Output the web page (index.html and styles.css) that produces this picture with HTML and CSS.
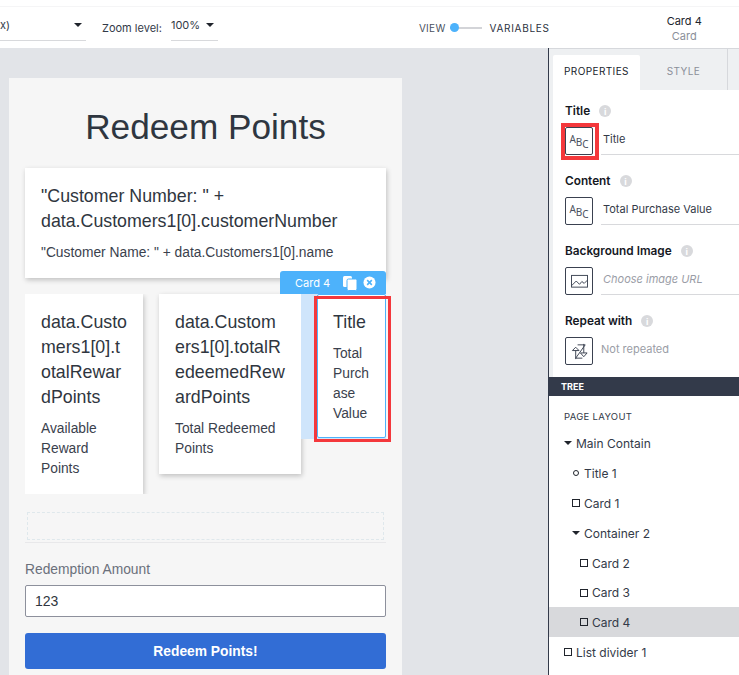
FILE: index.html
```html
<!DOCTYPE html>
<html lang="en">
<head>
<meta charset="utf-8">
<title>Redeem Points</title>
<link rel="stylesheet" href="styles.css">
</head>
<body>
<div class="app">
  <header class="toolbar">
    <div class="select select-device"><span>x)</span><i class="caret"></i></div>
    <span class="zoom-label">Zoom level:</span>
    <div class="select select-zoom"><span>100%</span><i class="caret"></i></div>
    <div class="toggle">
      <span class="toggle-view">VIEW</span>
      <span class="switch"><i class="knob"></i></span>
      <span class="toggle-vars">VARIABLES</span>
    </div>
    <div class="selected-name"><span class="sel-title">Card 4</span><span class="sel-type">Card</span></div>
  </header>
  <div class="workspace">
    <main class="canvas">
      <div class="phone">
        <h1 class="page-title">Redeem Points</h1>
        <section class="card card-wide">
          <h2 class="card-title">"Customer Number: " + data.Customers1[0].customerNumber</h2>
          <p class="card-body">"Customer Name: " + data.Customers1[0].name</p>
        </section>
        <div class="card-row">
          <section class="card card-two">
            <h2 class="card-title">data.Customers1[0].totalRewardPoints</h2>
            <p class="card-body">Available Reward Points</p>
          </section>
          <section class="card card-three">
            <h2 class="card-title">data.Customers1[0].totalRedeemedRewardPoints</h2>
            <p class="card-body">Total Redeemed Points</p>
          </section>
          <div class="card-four-slot">
            <section class="card card-four">
              <h2 class="card-title">Title</h2>
              <p class="card-body">Total Purchase Value</p>
            </section>
            <div class="badge">
              <span>Card 4</span>
              <svg class="badge-icon" viewBox="0 0 16 16" width="16" height="16"><rect x="1" y="1" width="9" height="11" rx="1.5" fill="#fff"/><rect x="5" y="4" width="10" height="11.5" rx="1.5" fill="#fff" stroke="#4db2fb" stroke-width="1"/></svg>
              <svg class="badge-icon" viewBox="0 0 14 14" width="13" height="13"><circle cx="7" cy="7" r="6.5" fill="#fff"/><path d="M4.5 4.5l5 5M9.5 4.5l-5 5" stroke="#4db2fb" stroke-width="1.7"/></svg>
            </div>
            <div class="red-frame"></div>
          </div>
        </div>
        <div class="dropzone"></div>
        <div class="divider"></div>
        <label class="field-label">Redemption Amount</label>
        <div class="field-input">123</div>
        <button class="redeem">Redeem Points!</button>
      </div>
    </main>
    <aside class="panel">
      <nav class="tabs">
        <span class="tab tab-active">PROPERTIES</span>
        <span class="tab">STYLE</span>
        <span class="tab tab-rest"></span>
      </nav>
      <div class="props">
        <div class="prop">
          <div class="prop-label">Title <i class="info">i</i></div>
          <div class="prop-row">
            <span class="prop-icon prop-icon-marked"><span class="abc"><b>A</b><b>B</b><b>C</b></span></span>
            <span class="prop-value">Title</span>
          </div>
        </div>
        <div class="prop">
          <div class="prop-label">Content <i class="info">i</i></div>
          <div class="prop-row">
            <span class="prop-icon"><span class="abc"><b>A</b><b>B</b><b>C</b></span></span>
            <span class="prop-value">Total Purchase Value</span>
          </div>
        </div>
        <div class="prop">
          <div class="prop-label">Background Image <i class="info">i</i></div>
          <div class="prop-row">
            <span class="prop-icon"><svg viewBox="0 0 20 16" width="19" height="15" fill="none" stroke="#3a4150"><rect x="1.5" y="1.5" width="17" height="12.500"/><path d="M1.5 12.500l5-5 3.500 3.500 2.500-3 2.500 2 3.500-3.500"/></svg></span>
            <span class="prop-value prop-placeholder">Choose image URL</span>
          </div>
        </div>
        <div class="prop">
          <div class="prop-label">Repeat with <i class="info">i</i></div>
          <div class="prop-row prop-row-plain">
            <span class="prop-icon"><svg viewBox="0 0 20 20" width="19" height="19" fill="none" stroke="#3a4150"><path d="M2.500 9L6 5.500 9.500 9zM6 9v9M11 11.500h7l-3.500 4zM14.500 2v9.500M8 3h8L6 17h7"/></svg></span>
            <span class="prop-value prop-muted">Not repeated</span>
          </div>
        </div>
      </div>
      <div class="tree-head">TREE</div>
      <div class="tree">
        <div class="tree-title">PAGE LAYOUT</div>
        <div class="node lvl0"><i class="caret caret-sm"></i>Main Contain</div>
        <div class="node lvl1"><i class="dot"></i>Title 1</div>
        <div class="node lvl1"><i class="box"></i>Card 1</div>
        <div class="node lvl1"><i class="caret caret-sm"></i>Container 2</div>
        <div class="node lvl2"><i class="box"></i>Card 2</div>
        <div class="node lvl2 node-tight"><i class="box"></i>Card 3</div>
        <div class="node lvl2 node-selected"><i class="box"></i>Card 4</div>
        <div class="node lvl0"><i class="box"></i>List divider 1</div>
      </div>
    </aside>
  </div>
</div>
</body>
</html>
```
FILE: styles.css
```css
* { box-sizing: border-box; }
html, body { margin: 0; padding: 0; height: 100%; overflow: hidden; background: #fff; }
body { font-family: "Liberation Sans", sans-serif; color: #2f3542; }
.app { width: 739px; height: 675px; display: flex; flex-direction: column; overflow: hidden; }

.toolbar { flex: none; display: flex; align-items: center; background: #fff; border-top: 1px solid #f5f5f6; margin-top: 6px; height: 42px; font-family: Inter, sans-serif; font-size: 11px; color: #333a48; }
.select { align-self: flex-start; display: flex; align-items: center; justify-content: space-between; height: 34px; border-bottom: 1px solid #d8d9dc; font-size: 11px; padding-top: 2px; }
.select-device { width: 86px; padding-right: 4px; }
.select-zoom { width: 47px; margin-left: 9px; padding-right: 4px; }
.caret { display: block; width: 0; height: 0; border-left: 4.5px solid transparent; border-right: 4.5px solid transparent; border-top: 4.5px solid #20242c; }
.zoom-label { margin-left: 16px; padding-top: 1px; }
.toggle { display: flex; align-items: center; margin-left: 201px; font-size: 10px; letter-spacing: .3px; }
.toggle-view { color: #4a5160; }
.toggle-vars { color: #2b3140; margin-left: 8px; letter-spacing: .7px; }
.switch { position: relative; width: 32px; height: 2px; background: #d3d4d8; margin-left: 4px; }
.knob { position: absolute; left: 0; top: -4px; width: 9px; height: 9px; border-radius: 50%; background: #4db2fb; }
.selected-name { display: flex; flex-direction: column; align-items: center; margin-left: 117px; line-height: 15px; padding-top: 2px; }
.sel-title { color: #20242c; }
.sel-type { color: #8b8f99; }

.workspace { flex: 1; display: flex; min-height: 0; }
.canvas { width: 548px; flex: none; background: #e2e4e8; padding: 30px 0 0 9px; overflow: hidden; }
.phone { width: 393px; height: 620px; background: #f6f6f6; padding: 0 16px; display: flex; flex-direction: column; }
.page-title { margin: 0; height: 90px; line-height: 98px; font-size: 35.200px; font-weight: 400; text-align: center; color: #2f3640; }
.card { background: #fff; box-shadow: 1px 2px 5px rgba(0,0,0,.22); padding: 16px; overflow-wrap: anywhere; }
.card-title { margin: 0; font-size: 17.800px; font-weight: 400; line-height: 25px; color: #2f3640; }
.card-body { margin: 9px 0 0; font-size: 13.800px; line-height: 20px; color: #3a414d; }
.card-wide { height: 110px; }
.card-row { display: flex; margin-top: 16px; height: 200px; align-items: flex-start; }
.card-two { width: 118px; height: 200px; clip-path: inset(0 -6px 0 0); }
.card-three { width: 142px; height: 180px; margin-left: 16px; }
.card-four-slot { position: relative; width: 85px; height: 145px; background: #cfe5fb; display: flex; justify-content: flex-end; }
.card-four { width: 69px; height: 144px; padding: 15px 10px 0 15px; border: 1px solid #4db2fb; border-radius: 2px; box-shadow: none; }
.badge { position: absolute; right: 0; top: -23px; width: 106px; height: 23px; background: #4db2fb; border-radius: 3px 3px 0 0; color: #fff; font-size: 11px; display: flex; align-items: center; padding-left: 15px; gap: 5px; font-family: Inter, sans-serif; }
.badge span { margin-right: 7px; }
.badge-icon { flex: none; }
.red-frame { position: absolute; left: 13px; top: 2px; width: 77px; height: 146px; border: 3px solid #f4383c; }
.dropzone { height: 28px; margin: 18px 2px 0; border: 1px dashed #dfe8ec; }
.divider { height: 1px; background: #e8e8ea; margin-top: 2px; }
.field-label { margin-top: 17px; font-size: 13.800px; line-height: 20px; color: #6a707b; }
.field-input { margin-top: 5px; height: 32px; border: 1px solid #8d909c; border-radius: 2px; background: #fff; padding-left: 9px; font-size: 14px; line-height: 30px; color: #2f3640; }
.redeem { margin-top: 16px; height: 36px; flex: none; border: 0; border-radius: 3px; background: #326dd5; color: #fff; font-family: "Liberation Sans", sans-serif; font-weight: 700; font-size: 13.800px; }

.panel { flex: 1; min-width: 0; border-left: 1px solid #333a4a; background: #fff; display: flex; flex-direction: column; font-family: Inter, sans-serif; overflow: hidden; }
.tabs { display: flex; height: 42px; flex: none; background: #eef0f2; border-top: 1px solid #d6d8dc; padding: 6px 0 0 4px; font-size: 10px; letter-spacing: .4px; }
.tab { width: 87px; display: flex; align-items: center; justify-content: center; color: #8b8f99; padding-bottom: 3px; }
.tab-active { background: #fff; color: #20242c; border-radius: 2px 2px 0 0; }
.tab-rest { flex: 1; border-left: 1px solid #d6d8dc; margin-top: -6px; }
.props { height: 287px; flex: none; padding-top: 13px; border-left: 4px solid #eef0f2; }
.prop { height: 70px; padding-left: 12px; }
.prop-label { display: flex; align-items: center; height: 16px; font-size: 11.800px; font-weight: 600; color: #15181f; gap: 9px; }
.info { width: 12px; height: 12px; border-radius: 50%; background: #d8d9dc; color: #fff; font-size: 9px; font-weight: 700; font-style: normal; display: flex; align-items: center; justify-content: center; }
.prop-row { display: flex; align-items: center; margin-top: 8px; }
.prop-icon { position: relative; width: 28px; height: 28px; flex: none; border: 1px solid #3a4150; border-radius: 2px; display: flex; align-items: center; justify-content: center; background: #fff; }
.prop-icon-marked::after { content: ""; position: absolute; inset: -5px -7px -6px -5px; border: 4px solid #f4383c; }
.abc { display: flex; align-items: flex-start; height: 17px; font-size: 10px; color: #4b5160; font-family: "Noto Sans", sans-serif; }
.abc b { font-weight: 400; line-height: 12px; }
.abc b:nth-child(2) { margin-top: 3px; }
.abc b:nth-child(3) { margin-top: 5px; }
.prop-value { flex: 1; height: 27px; margin-left: 8px; padding-left: 2px; line-height: 23px; font-size: 11px; border-bottom: 1px solid #d8d9dc; color: #333a48; white-space: nowrap; }
.prop-placeholder { font-style: italic; color: #9a9da6; }
.prop-muted { border: 0; color: #9a9da6; margin-left: 8px; padding-left: 0; }

.tree-head { height: 19px; flex: none; background: #333a4a; color: #fff; font-size: 9px; font-weight: 700; line-height: 19px; padding-left: 12px; }
.tree { flex: 1; padding-top: 14px; color: #333a48; font-size: 12px; }
.tree-title { font-size: 9.500px; letter-spacing: .3px; height: 18px; line-height: 14px; padding-left: 15px; }
.node { height: 30px; display: flex; align-items: center; gap: 3px; font-size: 12px; }
.node-tight { height: 29px; }
.lvl0 { padding-left: 15px; }
.lvl1 { padding-left: 23px; }
.lvl2 { padding-left: 31px; }
.node-selected { background: #d8d9dc; }
.caret-sm { border-left-width: 4px; border-right-width: 4px; border-top-width: 4px; margin-right: 1px; }
.box { width: 8px; height: 8px; border: 1px solid #20242c; margin-right: 1px; }
.dot { width: 6px; height: 6px; border: 1px solid #20242c; border-radius: 50%; margin: 0 2px 0 1px; }
```
